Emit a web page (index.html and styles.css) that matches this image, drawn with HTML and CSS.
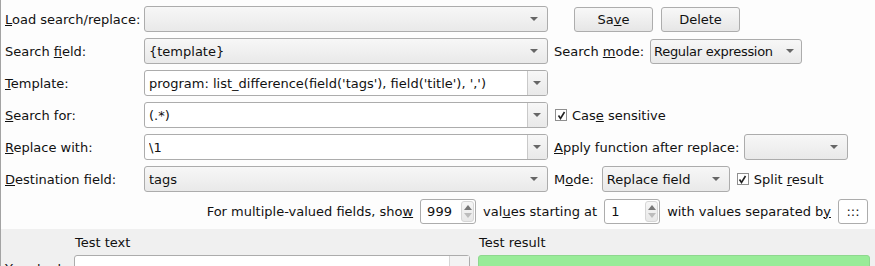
FILE: index.html
```html
<!DOCTYPE html>
<html lang="en">
<head>
    <meta charset="UTF-8">
    <title>Search &amp; replace</title>
    <link rel="stylesheet" href="styles.css">
</head>
<body>
<div class="page">
    <div class="form">
        <label class="lbl"><span><u>L</u>oad search/replace:</span></label>
        <div class="combo"><span class="val"></span><span class="arrow"></span></div>
        <div class="extra">
            <button class="btn">Sa<u>v</u>e</button>
            <button class="btn">Delete</button>
        </div>

        <label class="lbl"><span>Search <u>f</u>ield:</span></label>
        <div class="combo"><span class="val">{template}</span><span class="arrow"></span></div>
        <div class="extra">
            <span class="txt">Search <u>m</u>ode:</span>
            <div class="combo mode-regex"><span class="val">Regular expression</span><span class="arrow"></span></div>
        </div>

        <label class="lbl"><span><u>T</u>emplate:</span></label>
        <div class="combo edit"><span class="val">program: list_difference(field('tags'), field('title'), ',')</span><span class="drop"><span class="arrow"></span></span></div>
        <div class="extra"></div>

        <label class="lbl"><span><u>S</u>earch for:</span></label>
        <div class="combo edit"><span class="val">(.*)</span><span class="drop"><span class="arrow"></span></span></div>
        <div class="extra">
            <span class="check"><svg width="9" height="9" viewBox="0 0 9 9"><path d="M1.5 4.5 L3.5 7.5 L7.5 1" fill="none" stroke="#222" stroke-width="1.6"/></svg></span>
            <span class="txt">Cas<u>e</u> sensitive</span>
        </div>

        <label class="lbl"><span><u>R</u>eplace with:</span></label>
        <div class="combo edit"><span class="val">\1</span><span class="drop"><span class="arrow"></span></span></div>
        <div class="extra">
            <span class="txt"><u>A</u>pply function after replace:</span>
            <div class="combo func"><span class="val"></span><span class="arrow"></span></div>
        </div>

        <label class="lbl"><span><u>D</u>estination field:</span></label>
        <div class="combo"><span class="val">tags</span><span class="arrow"></span></div>
        <div class="extra">
            <span class="txt">M<u>o</u>de:</span>
            <div class="combo mode"><span class="val">Replace field</span><span class="arrow"></span></div>
            <span class="check"><svg width="9" height="9" viewBox="0 0 9 9"><path d="M1.5 4.5 L3.5 7.5 L7.5 1" fill="none" stroke="#222" stroke-width="1.6"/></svg></span>
            <span class="txt">Split <u>r</u>esult</span>
        </div>

        <div class="multi">
            <span class="txt">For multiple-valued fields, sho<u>w</u></span>
            <div class="spin"><span class="val">999</span><span class="spin-btns"><span class="up"></span><span class="down off"></span></span></div>
            <span class="txt">val<u>u</u>es starting at</span>
            <div class="spin"><span class="val">1</span><span class="spin-btns"><span class="up"></span><span class="down off"></span></span></div>
            <span class="txt">with values separated b<u>y</u></span>
            <div class="sep">:::</div>
        </div>
    </div>

    <div class="tests">
        <span></span>
        <span class="head">Test text</span>
        <span class="head">Test result</span>

        <span class="lbl2">Your text:</span>
        <div class="testbox"><span class="bar"></span></div>
        <div class="resultbox"></div>
    </div>
</div>
</body>
</html>
```

FILE: styles.css
```css
*{box-sizing: border-box;}
body{margin:0;background:#fdfdfd;}

.page{
    font-family: "DejaVu Sans", Verdana, sans-serif;
    font-size:13px;
    color:#111;
    border-left:1px solid #a3a3a3;
    height:266px;
    overflow:hidden;
}

.form{
    display:grid;
    grid-template-columns: 133px 404px 1fr;
    grid-auto-rows:26px;
    column-gap:6px;
    row-gap:6px;
    padding:6px 0 0 4px;
}
.lbl{
    display:flex;
    align-items:center;
    white-space:nowrap;
}
.extra{
    display:flex;
    align-items:center;
    gap:6px;
}
.txt{white-space:nowrap;}

.combo{
    display:flex;
    align-items:center;
    border:1px solid #acacac;
    border-radius:3px;
    background:linear-gradient(#f7f7f7,#e9e9e9);
    padding-left:4px;
    height:26px;
}
.combo .val{flex:1;min-width:0;white-space:nowrap;overflow:hidden;}
.arrow{
    flex:none;
    width:0;height:0;
    border-left:4px solid transparent;
    border-right:4px solid transparent;
    border-top:4px solid #666;
    margin:0 9px 0 6px;
}
.combo.edit{
    background:#fff;
    padding-left:4px;
}
.combo.edit .drop{
    display:flex;
    align-items:center;
    align-self:stretch;
    width:20px;
    border-left:1px solid #c9c9c9;
    background:linear-gradient(#f7f7f7,#e9e9e9);
    border-radius:0 2px 2px 0;
}
.combo.edit .drop .arrow{margin:0 0 0 5px;}

.mode-regex{width:152px;margin-left:0;height:25px;padding-left:3px;}
.mode-regex .val{letter-spacing:-0.3px;}
.mode-regex .arrow{margin:0 7px 0 3px;}
.func{width:104px;margin-left:-1px;}
.mode{width:128px;margin-left:2px;}

.btn{
    font:inherit;
    color:#111;
    height:25px;
    width:79px;
    border:1px solid #adadad;
    border-radius:3px;
    background:linear-gradient(#f8f8f8,#e6e6e6);
    padding:0;
}
.btn:first-child{margin-left:20px;margin-right:2px;}

.check{
    width:12px;height:12px;
    border:1px solid #8f8f8f;
    background:#fff;
    display:flex;
    align-items:center;
    justify-content:center;
    margin-left:1px;
    margin-right:-1px;
}

.multi{
    grid-column:1 / 4;
    display:flex;
    align-items:center;
    justify-content:flex-end;
    gap:7px;
    padding-right:7px;
}
.spin{
    display:flex;
    align-items:center;
    width:56px;
    height:25px;
    border:1px solid #acacac;
    border-radius:3px;
    background:#fff;
    padding-left:6px;
}
.spin .val{flex:1;}
.spin-btns{
    display:flex;
    flex-direction:column;
    justify-content:center;
    align-items:center;
    gap:3px;
    width:13px;
    height:21px;
    margin-right:1px;
    border:1px solid #d6d6d6;
    border-radius:3px;
    background:linear-gradient(#f6f6f6,#e8e8e8);
}
.spin-btns .up{
    width:0;height:0;
    border-left:4px solid transparent;
    border-right:4px solid transparent;
    border-bottom:5px solid #777;
}
.spin-btns .down{
    width:0;height:0;
    border-left:4px solid transparent;
    border-right:4px solid transparent;
    border-top:5px solid #777;
}
.spin-btns .off{border-top-color:#bcbcbc;}
.sep{
    width:30px;
    height:25px;
    border:1px solid #acacac;
    border-radius:3px;
    background:#fff;
    display:flex;
    align-items:center;
    justify-content:center;
}

.tests{
    margin-top:5px;
    background:#f0f0f0;
    display:grid;
    grid-template-columns: 65px 396px 392px;
    grid-template-rows:25px 40px;
    column-gap:8px;
    height:40px;
}
.head{
    display:flex;
    align-items:center;
    padding-left:1px;
    padding-top:1px;
}
.lbl2{
    padding:7px 0 0 4px;
    white-space:nowrap;
}
.testbox{
    margin-top:1px;
    border:1px solid #acacac;
    border-radius:3px 3px 0 0;
    background:#fff;
    display:flex;
    justify-content:flex-end;
}
.testbox .bar{
    width:20px;
    border-left:1px solid #d6d6d6;
    background:#f3f3f3;
}
.resultbox{
    margin-top:1px;
    border:1px solid #8ed88e;
    border-radius:3px 3px 0 0;
    background:#98ec98;
}
```
